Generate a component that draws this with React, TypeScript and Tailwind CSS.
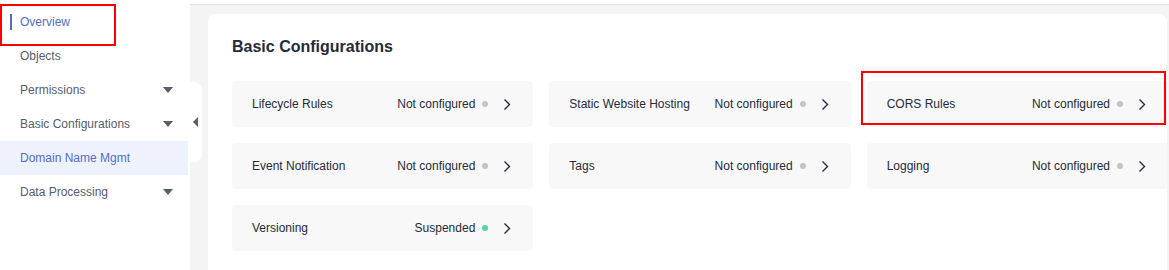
import React from "react";

type Item = { label: string; status: string; on?: boolean };

const menu = [
  { name: "Overview", active: true },
  { name: "Objects" },
  { name: "Permissions", caret: true },
  { name: "Basic Configurations", caret: true },
  { name: "Domain Name Mgmt", selected: true },
  { name: "Data Processing", caret: true },
];

const items: Item[] = [
  { label: "Lifecycle Rules", status: "Not configured" },
  { label: "Static Website Hosting", status: "Not configured" },
  { label: "CORS Rules", status: "Not configured" },
  { label: "Event Notification", status: "Not configured" },
  { label: "Tags", status: "Not configured" },
  { label: "Logging", status: "Not configured" },
  { label: "Versioning", status: "Suspended", on: true },
];

function Chevron() {
  return (
    <svg width="8" height="13" viewBox="0 0 8 13" fill="none">
      <path d="M1.5 1.5L6.5 6.5L1.5 11.5" stroke="#252b3a" strokeWidth="1.4" />
    </svg>
  );
}

function ConfigItem({ item }: { item: Item }) {
  return (
    <div className="flex h-[46px] items-center justify-between rounded-sm bg-[#f8f8f8] pl-5 pr-[22px] text-[12px] text-[#252b3a]">
      <span>{item.label}</span>
      <div className="flex items-center">
        <span>{item.status}</span>
        <span
          className={
            "ml-[7px] h-[6px] w-[6px] rounded-full " +
            (item.on ? "bg-[#50d4ab]" : "bg-[#c3c4c9]")
          }
        ></span>
        <span className="ml-[15px] flex">
          <Chevron />
        </span>
      </div>
    </div>
  );
}

export default function App() {
  return (
    <div
      className="relative flex h-[270px] w-[1169px] overflow-hidden bg-white"
      style={{ fontFamily: '"Liberation Sans", Arial, sans-serif' }}
    >
      {/* sidebar */}
      <div className="relative w-[190px] shrink-0 bg-white pt-[5px] text-[12px] text-[#575d6c]">
        {menu.map((m) => (
          <div
            key={m.name}
            className={
              "flex h-[34px] w-[188px] items-center justify-between pl-5 pr-[15px] " +
              (m.selected ? "bg-[#eef2fc] text-[#526ecc]" : "") +
              (m.active ? " relative text-[#526ecc]" : "")
            }
          >
            {m.active && (
              <span className="absolute left-[10px] top-[9px] h-[16px] w-[2px] bg-[#526ecc]"></span>
            )}
            <span>{m.name}</span>
            {m.caret && (
              <span className="h-0 w-0 border-x-[5px] border-t-[6px] border-x-transparent border-t-[#575d6c]"></span>
            )}
          </div>
        ))}
        {/* collapse handle */}
        <div className="absolute left-[190px] top-[82px] flex h-[80px] w-[12px] items-center rounded-r-lg bg-white pl-[3px]">
          <span className="h-0 w-0 border-y-[5px] border-r-[5px] border-y-transparent border-r-[#575d6c]"></span>
        </div>
      </div>

      {/* main */}
      <div className="flex flex-1 flex-col overflow-hidden">
        <div className="h-[5px] shrink-0 border-b border-[#e2e2e2] bg-white"></div>
        <div className="flex-1 bg-[#f4f4f4] pl-[18px] pr-[2px] pt-[9px]">
          <div className="h-[300px] overflow-hidden rounded-lg bg-white pl-6 pt-[24px]">
            <h2 className="text-[16px] font-bold leading-[18px] text-[#252b3a]">
              Basic Configurations
            </h2>
            <div className="mt-[25px] grid w-[936px] grid-cols-3 gap-4">
              {items.map((it) => (
                <ConfigItem key={it.label} item={it} />
              ))}
            </div>
          </div>
        </div>
      </div>

      {/* annotation boxes */}
      <div className="pointer-events-none absolute left-0 top-[4px] h-[42px] w-[116px] border-2 border-[#ff0000]"></div>
      <div className="pointer-events-none absolute left-[861px] top-[71px] h-[54px] w-[305px] border-2 border-[#ff0000]"></div>
    </div>
  );
}
